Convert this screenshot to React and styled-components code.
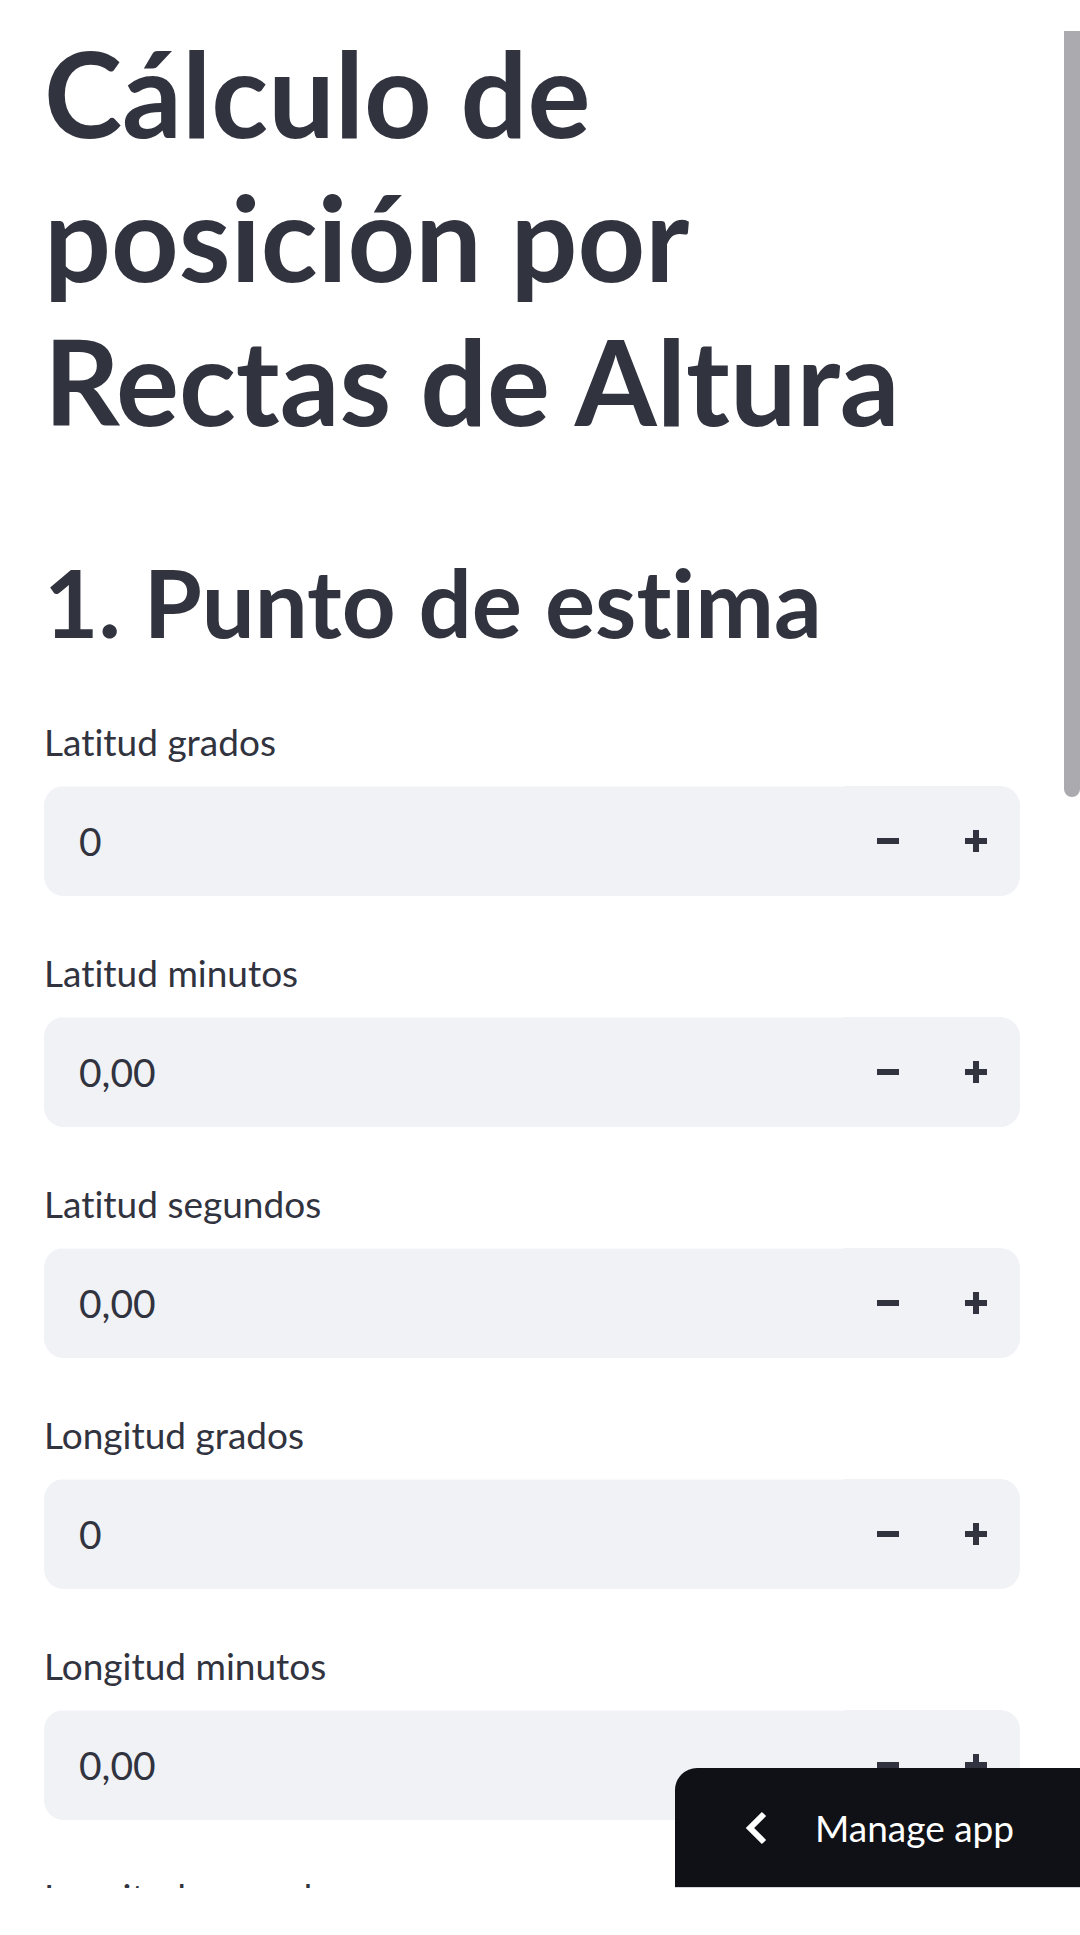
import React from 'react'
import styled, { createGlobalStyle } from 'styled-components'

const GlobalStyle = createGlobalStyle`
    html, body {
        margin: 0;
        padding: 0;
        background: #ffffff;
    }
    body {
        font-family: Lato, "Noto Sans", sans-serif;
        font-variant-ligatures: none;
        color: #31333f;
    }
`;

const Viewport = styled.div`
    position: relative;
    height: 1888px;
    overflow: hidden;
    background: #ffffff;
`;

const Main = styled.main`
    padding: 0 60px 0 44px;
`;

const Title = styled.h1`
    margin: 21px 0 0 0;
    font-size: 118px;
    line-height: 144px;
    font-weight: 700;
    color: #31333f;
`;

const Section = styled.h2`
    margin: 93px 0 0 0;
    font-size: 94px;
    line-height: 1.2;
    font-weight: 700;
    color: #31333f;
`;

const Fields = styled.div`
    display: flex;
    flex-direction: column;
    gap: 47px;
    margin-top: 53px;
`;

const Field = styled.div`
    display: flex;
    flex-direction: column;
`;

const Label = styled.label`
    font-size: 37px;
    line-height: 59px;
    margin-bottom: 15px;
    color: #31333f;
`;

const InputBox = styled.div`
    display: flex;
    align-items: stretch;
    height: 110px;
    background: #f0f2f6;
    border-radius: 20px;
    overflow: hidden;
`;

const Value = styled.div`
    flex: 1;
    display: flex;
    align-items: center;
    padding-left: 35px;
    font-size: 39px;
    color: #31333f;
    border-top: 1px solid #f9fafb;
`;

const StepButton = styled.button`
    width: 88px;
    border: none;
    background: transparent;
    padding: 0;
    display: flex;
    align-items: center;
    justify-content: center;
    color: #31333f;
    cursor: pointer;
`;

const ScrollThumb = styled.div`
    position: absolute;
    top: 31px;
    right: 0;
    width: 16px;
    height: 766px;
    background: #aaaaaf;
    border-radius: 0 0 8px 8px;
`;

const ManageButton = styled.button`
    position: absolute;
    right: 0;
    bottom: 0;
    width: 405px;
    height: 120px;
    display: flex;
    align-items: center;
    gap: 48px;
    padding: 0 0 0 70px;
    background: #0f1116;
    color: #ffffff;
    border: none;
    border-bottom: 1px solid #d6d6d9;
    border-top-left-radius: 22px;
    font-family: Lato, "Noto Sans", sans-serif;
    font-size: 37px;
    cursor: pointer;
    z-index: 2;
`;

const BottomSpace = styled.div`
    height: 47px;
    background: #ffffff;
`;

const Minus = () => (
    <svg width="22" height="22" viewBox="0 0 22 22">
        <rect x="0" y="8" width="22" height="6" fill="currentColor" />
    </svg>
)

const Plus = () => (
    <svg width="22" height="22" viewBox="0 0 22 22">
        <rect x="0" y="8" width="22" height="6" fill="currentColor" />
        <rect x="8" y="0" width="6" height="22" fill="currentColor" />
    </svg>
)

const Chevron = () => (
    <svg width="22" height="34" viewBox="0 0 22 34">
        <polyline points="19,3 5,17 19,31" fill="none" stroke="#ffffff" strokeWidth="6" />
    </svg>
)

const fields = [
    { label: 'Latitud grados', value: '0' },
    { label: 'Latitud minutos', value: '0,00' },
    { label: 'Latitud segundos', value: '0,00' },
    { label: 'Longitud grados', value: '0' },
    { label: 'Longitud minutos', value: '0,00' },
    { label: 'Longitud segundos', value: '0,00' },
]

function NumberField({ label, value }) {
    return (
        <Field>
            <Label>{label}</Label>
            <InputBox>
                <Value>{value}</Value>
                <StepButton aria-label="Restar"><Minus /></StepButton>
                <StepButton aria-label="Sumar"><Plus /></StepButton>
            </InputBox>
        </Field>
    )
}

export default function App() {
    return (
        <>
            <GlobalStyle />
            <Viewport>
                <Main>
                    <Title>Cálculo de posición por Rectas de Altura</Title>
                    <Section>1. Punto de estima</Section>
                    <Fields>
                        {fields.map((f) => (
                            <NumberField key={f.label} label={f.label} value={f.value} />
                        ))}
                    </Fields>
                </Main>
                <ScrollThumb />
                <ManageButton>
                    <Chevron />
                    Manage app
                </ManageButton>
            </Viewport>
            <BottomSpace />
        </>
    )
}
